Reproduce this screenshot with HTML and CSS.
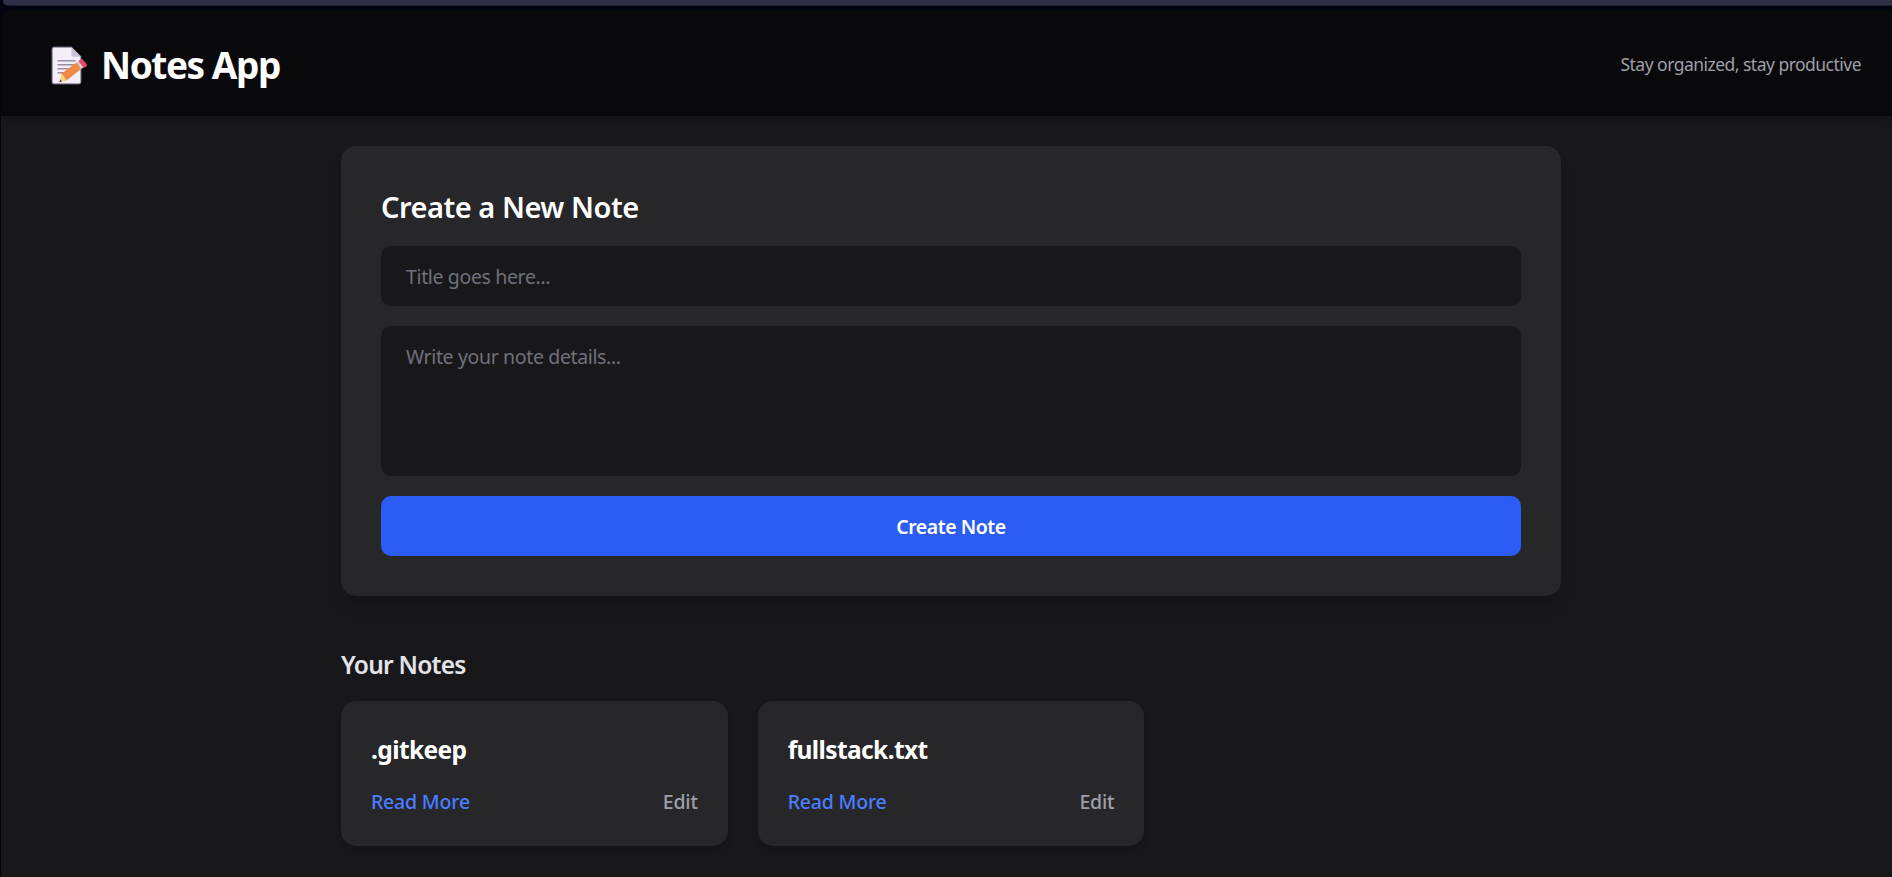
FILE: index.html
```html
<!DOCTYPE html>
<html lang="en">
<head>
<meta charset="utf-8">
<title>Notes App</title>
<link rel="stylesheet" href="styles.css">
</head>
<body>
<div class="chrome"><div class="chrome-bar"></div></div>
<div class="app">
  <header class="header">
    <h1 class="brand">
      <svg class="brand-icon" viewBox="0 0 36 40" aria-hidden="true">
        <path d="M3 1.200H20.500L29.800 10.500V36a1.800 1.800 0 0 1-1.800 1.800H3A1.800 1.800 0 0 1 1.200 36V3a1.800 1.800 0 0 1 1.800-1.800z" fill="#f3eef8" stroke="#9c94aa" stroke-width="1"/>
        <path d="M20.300 1.200L29.800 10.700H22a1.700 1.700 0 0 1-1.700-1.700z" fill="#cdc4d6"/>
        <path d="M6.500 14.800H24.500M6.500 18.800H24.500M6.500 22.800H20M6.500 26.700H16" stroke="#998ea4" stroke-width="1.500"/>
        <path d="M10.300 27.800L26 16.200L30.600 22.600L15.600 34.400z" fill="#f18a45"/>
        <path d="M10.300 27.800L15.600 34.400L8.600 36.200z" fill="#fbd77f"/>
        <path d="M9.300 33.300L11 35.500L8.300 36.300z" fill="#433b6b"/>
        <path d="M25.500 16.600L28 14.700L32.900 21L30.300 23z" fill="#d4cfdc"/>
        <path d="M27.500 15.100L29.600 13.600a1.800 1.800 0 0 1 2.600.4L35.500 18a1.800 1.800 0 0 1-.3 2.400L32.600 22z" fill="#e8466b"/>
      </svg>
      <span class="brand-name">Notes App</span>
    </h1>
    <p class="tagline">Stay organized, stay productive</p>
  </header>
  <main class="main">
    <form class="composer">
      <h2 class="composer-title">Create a New Note</h2>
      <input class="field field-title" type="text" placeholder="Title goes here...">
      <textarea class="field field-details" placeholder="Write your note details..."></textarea>
      <button class="submit" type="button">Create Note</button>
    </form>
    <h3 class="list-title">Your Notes</h3>
    <section class="notes">
      <article class="note">
        <h4 class="note-title">.gitkeep</h4>
        <div class="note-actions"><a class="read">Read More</a><a class="edit">Edit</a></div>
      </article>
      <article class="note">
        <h4 class="note-title">fullstack.txt</h4>
        <div class="note-actions"><a class="read">Read More</a><a class="edit">Edit</a></div>
      </article>
    </section>
  </main>
</div>
</body>
</html>
```
FILE: styles.css
```css
* { box-sizing: border-box; margin: 0; padding: 0; }
body {
  height: 877px;
  overflow: hidden;
  background: #020412;
  color: #fff;
  font-family: "Noto Sans", sans-serif;
}
.chrome { height: 11px; padding-left: 3px; }
.chrome-bar { height: 6px; background: #2e3246; border-bottom: 1px solid #1b1e30; border-bottom-left-radius: 5px; }
.app { height: 866px; margin-left: 1px; background: #18181b; border-top-left-radius: 8px; overflow: hidden; }
.header {
  display: flex;
  align-items: center;
  justify-content: space-between;
  height: 105px;
  padding: 2px 31px 0 50px;
  background: #09090b;
  box-shadow: 0 5px 8px -1px rgba(0, 0, 0, .1), 0 3px 5px -2px rgba(0, 0, 0, .1);
}
.brand { display: flex; align-items: center; }
.brand-icon { width: 36px; height: 40px; margin-top: 2px; }
.brand-name { margin: 1px 0 0 14px; font-size: 37px; line-height: 50px; font-weight: 700; letter-spacing: -1.45px; }
.tagline { color: #9f9fa9; font-size: 17.5px; line-height: 25px; letter-spacing: -.52px; }
.main { width: 1220px; margin: 30px 0 0 340px; }
.composer {
  display: flex;
  flex-direction: column;
  height: 450px;
  padding: 40px;
  border-radius: 15px;
  background: #27272a;
  box-shadow: 0 12px 19px -4px rgba(0, 0, 0, .1), 0 5px 8px -5px rgba(0, 0, 0, .1);
}
.composer-title { height: 60px; padding-top: 1px; font-size: 29px; line-height: 40px; font-weight: 600; letter-spacing: -.48px; }
.field {
  display: block;
  width: 100%;
  padding: 16px 25px 14px;
  border: 0;
  border-radius: 10px;
  background: #18181b;
  color: #fff;
  font: 400 19.5px/30px "Noto Sans", sans-serif;
  letter-spacing: -.36px;
  resize: none;
}
.field::placeholder { color: #71717b; opacity: 1; }
.field-title { height: 60px; padding: 15px 25px; }
.field-details { height: 150px; margin-top: 20px; }
.submit {
  height: 60px;
  margin-top: 20px;
  padding-top: 2px;
  border: 0;
  border-radius: 10px;
  background: #2b5df5;
  color: #fff;
  font: 600 19.5px/30px "Noto Sans", sans-serif;
  letter-spacing: -.45px;
}
.list-title { margin-top: 51px; color: #e4e4e7; font-size: 24.5px; line-height: 35px; font-weight: 600; letter-spacing: -.75px; }
.notes { display: grid; grid-template-columns: repeat(3, 1fr); gap: 30px; margin-top: 19px; }
.note { height: 145px; padding: 31px 30px 29px; border-radius: 15px; background: #27272a; box-shadow: 0 5px 8px -1px rgba(0, 0, 0, .1), 0 3px 5px -2px rgba(0, 0, 0, .1); }
.note-title { font-size: 24.5px; line-height: 35px; font-weight: 700; letter-spacing: -.6px; }
.note-actions { display: flex; justify-content: space-between; margin-top: 20px; font-size: 19.5px; line-height: 30px; font-weight: 500; letter-spacing: -.2px; }
.read { color: #4a7dff; }
.edit { color: #9f9fa9; }
```
